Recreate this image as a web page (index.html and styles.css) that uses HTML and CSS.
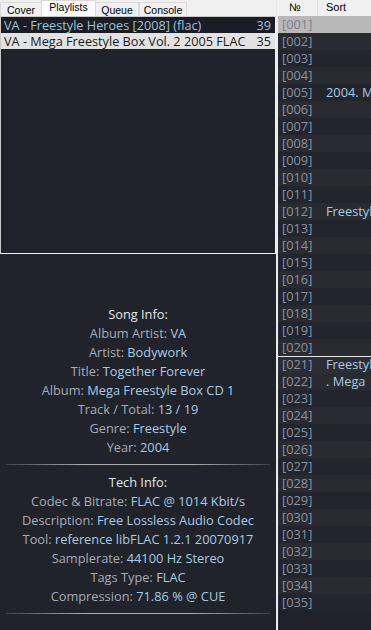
FILE: index.html
```html
<!DOCTYPE html>
<html>
<head>
<meta charset="utf-8">
<link rel="stylesheet" href="styles.css">
</head>
<body>
<div class="app">
  <div class="left">
    <div class="tabs">
      <div class="tab t-cover">Cover</div>
      <div class="tab active t-pl">Playlists</div>
      <div class="tab t-queue">Queue</div>
      <div class="tab t-console">Console</div>
    </div>
    <div class="playlists">
      <div class="pl-row pl-playing"><span class="pl-name">VA - Freestyle Heroes [2008] (flac)</span><span class="pl-count">39</span></div>
      <div class="pl-row pl-selected"><span class="pl-name">VA - Mega Freestyle Box Vol. 2 2005 FLAC</span><span class="pl-count">35</span></div>
    </div>
    <div class="info">
      <div class="info-block">
        <div class="info-title">Song Info:</div>
        <div class="info-line">Album Artist: <span class="val">VA</span></div>
        <div class="info-line">Artist: <span class="val">Bodywork</span></div>
        <div class="info-line">Title: <span class="val">Together Forever</span></div>
        <div class="info-line">Album: <span class="val">Mega Freestyle Box CD 1</span></div>
        <div class="info-line">Track / Total: <span class="val">13 / 19</span></div>
        <div class="info-line">Genre: <span class="val">Freestyle</span></div>
        <div class="info-line">Year: <span class="val">2004</span></div>
      </div>
      <div class="sep"></div>
      <div class="info-block">
        <div class="info-title">Tech Info:</div>
        <div class="info-line">Codec &amp; Bitrate: <span class="val">FLAC @ 1014 Kbit/s</span></div>
        <div class="info-line">Description: <span class="val">Free Lossless Audio Codec</span></div>
        <div class="info-line">Tool: <span class="val">reference libFLAC 1.2.1 20070917</span></div>
        <div class="info-line">Samplerate: <span class="val">44100 Hz Stereo</span></div>
        <div class="info-line">Tags Type: <span class="val">FLAC</span></div>
        <div class="info-line">Compression: <span class="val">71.86 % @ CUE</span></div>
      </div>
      <div class="sep"></div>
    </div>
  </div>
  <div class="right">
    <div class="list-head">
      <div class="col-no">№</div>
      <div class="col-sort">Sort</div>
    </div>
    <div class="tracks">
      <div class="trk sel"><span class="no">[001]</span><span class="sort"></span></div>
      <div class="trk"><span class="no">[002]</span><span class="sort"></span></div>
      <div class="trk"><span class="no">[003]</span><span class="sort"></span></div>
      <div class="trk"><span class="no">[004]</span><span class="sort"></span></div>
      <div class="trk"><span class="no">[005]</span><span class="sort">2004. Mega</span></div>
      <div class="trk"><span class="no">[006]</span><span class="sort"></span></div>
      <div class="trk"><span class="no">[007]</span><span class="sort"></span></div>
      <div class="trk"><span class="no">[008]</span><span class="sort"></span></div>
      <div class="trk"><span class="no">[009]</span><span class="sort"></span></div>
      <div class="trk"><span class="no">[010]</span><span class="sort"></span></div>
      <div class="trk"><span class="no">[011]</span><span class="sort"></span></div>
      <div class="trk"><span class="no">[012]</span><span class="sort">Freestyle</span></div>
      <div class="trk"><span class="no">[013]</span><span class="sort"></span></div>
      <div class="trk"><span class="no">[014]</span><span class="sort"></span></div>
      <div class="trk"><span class="no">[015]</span><span class="sort"></span></div>
      <div class="trk"><span class="no">[016]</span><span class="sort"></span></div>
      <div class="trk"><span class="no">[017]</span><span class="sort"></span></div>
      <div class="trk"><span class="no">[018]</span><span class="sort"></span></div>
      <div class="trk"><span class="no">[019]</span><span class="sort"></span></div>
      <div class="trk"><span class="no">[020]</span><span class="sort"></span></div>
      <div class="trk focus"><span class="no">[021]</span><span class="sort">Freestyle</span></div>
      <div class="trk"><span class="no">[022]</span><span class="sort">. Mega</span></div>
      <div class="trk"><span class="no">[023]</span><span class="sort"></span></div>
      <div class="trk"><span class="no">[024]</span><span class="sort"></span></div>
      <div class="trk"><span class="no">[025]</span><span class="sort"></span></div>
      <div class="trk"><span class="no">[026]</span><span class="sort"></span></div>
      <div class="trk"><span class="no">[027]</span><span class="sort"></span></div>
      <div class="trk"><span class="no">[028]</span><span class="sort"></span></div>
      <div class="trk"><span class="no">[029]</span><span class="sort"></span></div>
      <div class="trk"><span class="no">[030]</span><span class="sort"></span></div>
      <div class="trk"><span class="no">[031]</span><span class="sort"></span></div>
      <div class="trk"><span class="no">[032]</span><span class="sort"></span></div>
      <div class="trk"><span class="no">[033]</span><span class="sort"></span></div>
      <div class="trk"><span class="no">[034]</span><span class="sort"></span></div>
      <div class="trk"><span class="no">[035]</span><span class="sort"></span></div>
    </div>
  </div>
</div>
</body>
</html>
```

FILE: styles.css
```css
html, body {
  margin: 0;
  padding: 0;
}
body {
  width: 371px;
  height: 630px;
  overflow: hidden;
  background: #20232a;
  font-family: "Open Sans", "Noto Sans", sans-serif;
}
.app {
  display: grid;
  grid-template-columns: 277px 94px;
  height: 630px;
}
.left {
  display: flex;
  flex-direction: column;
  border-right: 1px solid #e8e8e8;
}
.tabs {
  display: flex;
  align-items: flex-end;
  height: 16px;
  background: #f0f0f0;
  font-family: "Liberation Sans", Arial, sans-serif;
  font-size: 10.5px;
  color: #000;
}
.tab {
  box-sizing: border-box;
  height: 14px;
  line-height: 14px;
  text-align: center;
  border: 1px solid #d9d9d9;
  border-bottom: none;
  background: #f0f0f0;
}
.t-cover { width: 42px; }
.t-pl { width: 55px; }
.t-queue { width: 44px; }
.t-console { width: 48px; }
.tab.active {
  height: 16px;
  line-height: 13px;
  background: #fff;
  margin: 0 -1px;
  position: relative;
  z-index: 1;
}
.playlists {
  height: 236px;
  background: #20232a;
  border: 1px solid #c8c8c8;
  border-right-color: #f4f4f4;
  border-bottom-color: #f4f4f4;
  font-size: 12.7px;
}
.pl-row {
  display: flex;
  justify-content: space-between;
  gap: 6px;
  height: 16px;
  line-height: 16px;
  padding: 0 4px 0 3px;
  white-space: nowrap;
}
.pl-playing {
  background: #1a1d24;
  color: #9dc2de;
}
.pl-selected {
  background: #e2e2e2;
  color: #1a1a1a;
}
.info {
  flex: 1;
  display: flex;
  flex-direction: column;
  padding-top: 51px;
  text-align: center;
  font-size: 12.8px;
  color: #a4acb6;
}
.info-line, .info-title {
  height: 19px;
  line-height: 19px;
}
.info-title {
  color: #e4e6e8;
}
.val {
  color: #a7cbe3;
}
.sep {
  height: 1px;
  margin: 7px 6px 8px;
  background: linear-gradient(to right, rgba(200,200,200,0.2), rgba(220,220,220,0.75) 30%, rgba(220,220,220,0.75) 70%, rgba(200,200,200,0.2));
}
.right {
  display: flex;
  flex-direction: column;
  border-left: 1px solid #f0f0f0;
  overflow: hidden;
}
.list-head {
  display: flex;
  height: 16px;
  background: #f0f0f0;
  font-family: "Liberation Sans", Arial, sans-serif;
  font-size: 11px;
  color: #000;
  line-height: 14px;
}
.col-no {
  width: 40px;
  padding-left: 11px;
  border-right: 1px solid #dcdcdc;
  box-sizing: border-box;
}
.col-sort {
  padding-left: 8px;
}
.tracks {
  font-size: 12.8px;
}
.trk {
  display: flex;
  height: 17px;
  line-height: 17px;
  background: #22252c;
  white-space: nowrap;
  overflow: hidden;
}
.trk:nth-child(even) {
  background: #2a2b30;
}
.trk.sel {
  background: #b8b8b8;
}
.trk.sel .no {
  color: #77838f;
}
.trk.focus {
  box-shadow: inset 0 1px 0 #e8e8e8;
  background: #2b2e35;
}
.no {
  width: 44px;
  padding-left: 4px;
  color: #8793a0;
  flex: none;
}
.sort {
  color: #a7cbe3;
  overflow: hidden;
  text-overflow: clip;
}
```
